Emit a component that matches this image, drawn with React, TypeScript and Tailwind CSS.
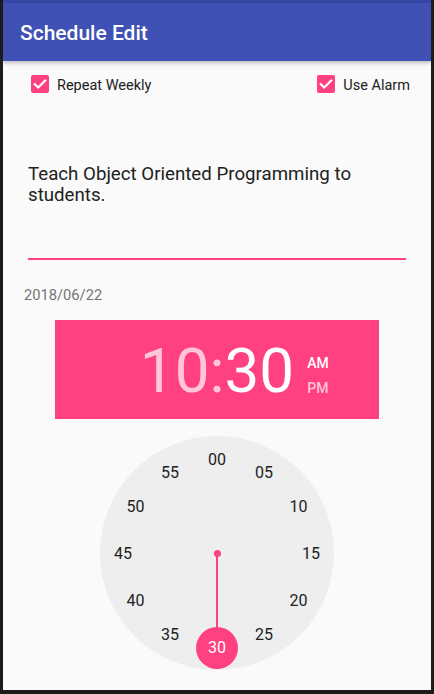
import React from "react";

function CheckBox() {
  return (
    <svg width="18" height="18" viewBox="0 0 18 18" className="shrink-0">
      <rect x="0" y="0" width="18" height="18" rx="2" fill="#ff4081" />
      <path d="M3.8 9.2 L7.2 12.5 L14.2 5.6" fill="none" stroke="#ffffff" strokeWidth="2.2" strokeLinecap="square" />
    </svg>
  );
}

const R = 117;
const NR = 94;

function Clock() {
  const labels = Array.from({ length: 12 }, (_, i) => i * 5);
  return (
    <div className="relative w-[234px] h-[234px] mx-auto mt-[17px] rounded-full bg-[#eeeeee] shrink-0">
      <div className="absolute left-[116px] top-[117px] w-[2px] h-[94px] bg-[#ff4081]" />
      <div className="absolute left-[113.5px] top-[113.5px] w-[7px] h-[7px] rounded-full bg-[#ff4081]" />
      <div className="absolute left-[96px] top-[191px] w-[42px] h-[42px] rounded-full bg-[#ff4081]" />
      {labels.map((m) => {
        const a = (m / 60) * Math.PI * 2;
        const x = R + NR * Math.sin(a);
        const y = R - NR * Math.cos(a) + 1;
        const txt = m.toString().padStart(2, "0");
        return (
          <span
            key={m}
            className={
              "absolute -translate-x-1/2 -translate-y-1/2 text-[16px] leading-[20px] " +
              (m === 30 ? "text-white" : "text-[#222222]")
            }
            style={{ left: x, top: y }}
          >
            {txt}
          </span>
        );
      })}
    </div>
  );
}

export default function App() {
  return (
    <div className="w-[434px] h-[694px] bg-[#1c1c1c] px-[3px] pb-[4px] flex flex-col font-['Roboto',sans-serif]">
      <div className="flex-1 bg-[#fafafa] flex flex-col overflow-hidden">
        <div className="h-[3px] bg-[#3646a6] shrink-0" />
        <div className="h-[58px] bg-[#3f51b5] flex items-center pl-[17px] shadow-[0_2px_4px_rgba(0,0,0,0.25)] relative z-10 shrink-0">
          <span className="text-white text-[21px] font-medium leading-none translate-y-[1px]">Schedule Edit</span>
        </div>

        <div className="flex items-center justify-between pl-[28px] pr-[21px] mt-[14px] h-[18px]">
          <div className="flex items-center gap-[8px]">
            <CheckBox />
            <span className="text-[14.5px] leading-[18px] text-[#212121] translate-y-[2px]">Repeat Weekly</span>
          </div>
          <div className="flex items-center gap-[8px]">
            <CheckBox />
            <span className="text-[14.5px] leading-[18px] text-[#212121] translate-y-[2px]">Use Alarm</span>
          </div>
        </div>

        <p className="mt-[71px] px-[25px] text-[18.7px] leading-[21px] text-[#212121]">
          Teach Object Oriented Programming to students.
        </p>
        <div className="mt-[52px] mx-[25px] h-[2px] bg-[#ff4081]" />

        <div className="mt-[26px] pl-[21px] text-[14.7px] leading-[18px] text-[#757575]">2018/06/22</div>

        <div className="mt-[16px] mx-auto w-[324px] h-[99px] bg-[#ff4081] grid grid-cols-[1fr_auto_1fr] items-center shrink-0">
          <span className="text-right text-[62px] font-normal leading-none text-white/70 translate-y-[1px]">10</span>
          <span className="text-[62px] font-normal leading-none text-white/70 translate-y-[1px]">:</span>
          <div className="flex items-center">
            <span className="text-[62px] font-normal leading-none text-white translate-y-[1px]">30</span>
            <div className="flex flex-col gap-[5px] ml-[13px] translate-y-[6px]">
              <span className="text-[14px] font-medium leading-[20px] text-white">AM</span>
              <span className="text-[14px] font-medium leading-[20px] text-white/70">PM</span>
            </div>
          </div>
        </div>

        <Clock />
      </div>
    </div>
  );
}
